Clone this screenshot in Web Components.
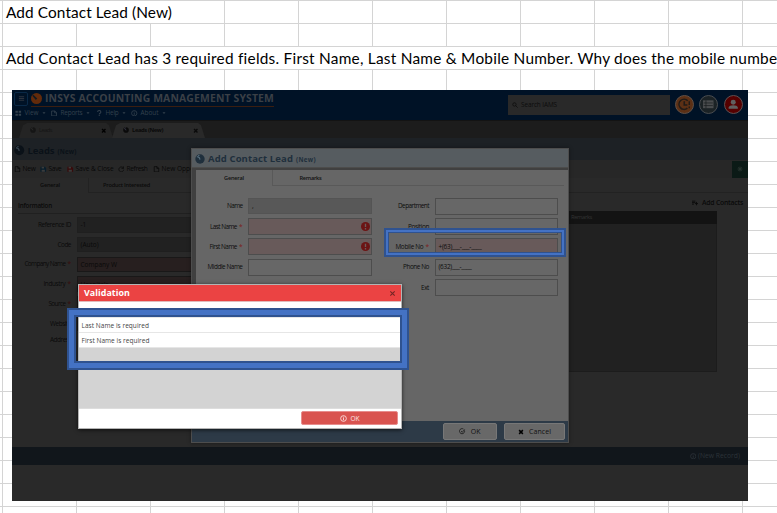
<!DOCTYPE html>
<html lang="en">
<head>
<meta charset="utf-8">
<title>Add Contact Lead (New)</title>
<style>
html,body{margin:0;width:777px;height:513px;overflow:hidden;background:#fff}
body{font-family:"Open Sans","Noto Sans",sans-serif}
</style>
</head>
<body>
<work-sheet>
  <sheet-note slot="row0" style="width:221px"><fit-text w="166" s="15.4">Add Contact Lead (New)</fit-text></sheet-note>
  <sheet-note slot="row2" style="width:774px"><fit-text w="771" s="15.4">Add Contact Lead has 3 required fields. First Name, Last Name &amp; Mobile Number. Why does the mobile numbe</fit-text></sheet-note>
  <lead-app></lead-app>
</work-sheet>
<script>
const def = (name, html, setup) => customElements.define(name, class extends HTMLElement {
  constructor(){ super(); this.attachShadow({mode:'open'}); }
  connectedCallback(){
    if (this.shadowRoot.childNodes.length) return;
    const t = document.createElement('template');
    t.innerHTML = typeof html === 'function' ? html(this) : html;
    this.shadowRoot.append(t.content.cloneNode(true));
    if (setup) setup(this);
  }
});
const a = (el, n, d='') => el.getAttribute(n) ?? d;

def('work-sheet', `<style>
:host{display:flex;flex-direction:column;position:relative;width:777px;height:513px;overflow:hidden;
background-image:linear-gradient(#d4d4d4 1px,transparent 1px),linear-gradient(90deg,transparent 2px,#d4d4d4 2px,#d4d4d4 3px,transparent 3px);
background-size:100% 23px,74px 100%}
.r{height:23px;padding-left:3px;flex:none;box-sizing:border-box}
.stage{margin:-2px 0 0 12px}
</style><div class="r"><slot name="row0"></slot></div><div class="r"></div><div class="r"><slot name="row2"></slot></div><div class="r"></div><div class="stage"><slot></slot></div>`);

def('sheet-note', `<style>:host{display:flex;align-items:center;box-sizing:border-box;height:22px;padding:1px 0 0 3px;background:#fff;color:#000;font-family:Lato,"Open Sans",sans-serif;white-space:nowrap;position:relative;top:1px}</style><slot></slot>`);

const ICONS = {
  globe:'<circle cx="8" cy="8" r="7.5" fill="currentColor"/><path d="M3 4l4 2 1 3M5 3l2-1" fill="none" stroke="var(--cut,#777)" stroke-width="2"/>',
  menu:'<path d="M2 4h12M2 8h12M2 12h12" stroke="currentColor" stroke-width="1.7"/>',
  windows:'<path d="M1 2h6v5H1zM9 2h6v5H9zM1 9h6v5H1zM9 9h6v5H9z" fill="currentColor"/>',
  file:'<path d="M3 1.5h7l4 4v9H3zM9.5 2v4H14" fill="none" stroke="currentColor" stroke-width="1.7"/>',
  report:'<path d="M1.5 2.5h8l4 4v8h-12zM9 2v5h5" fill="none" stroke="currentColor" stroke-width="2"/>',
  save:'<path d="M1 2h11l3 3v9H1z" fill="currentColor"/><path d="M4 2h6v4H4zM4 9h8v5H4z" fill="#3b3b3b"/>',
  refresh:'<path d="M13 5A6 6 0 1 0 14 9M13.500 1v5h-5" fill="none" stroke="currentColor" stroke-width="1.6"/>',
  help:'<path d="M4 5q0-3.500 4-3.500t4 3.500q0 2-2 3t-2 3M8 12.500v3" fill="none" stroke="currentColor" stroke-width="2.500"/>',
  info:'<circle cx="8" cy="8" r="6.5" fill="none" stroke="currentColor" stroke-width="2"/><path d="M8 7v5M8 4v2" stroke="currentColor" stroke-width="2"/>',
  clock:'<path d="M12 13A6.500 6.500 0 1 1 12.500 3.500M8 4v5h4M14.500 4v5M14.500 11v2" fill="none" stroke="currentColor" stroke-width="2"/>',
  list:'<path d="M0 2h16v12H0z" fill="currentColor"/><path d="M1 6h14M1 10h14M4.500 2v12" stroke="#151a1c" stroke-width="1"/>',
  user:'<circle cx="8" cy="5" r="3.800" fill="currentColor"/><path d="M1 15v-2q1-3.500 7-3.500t7 3.500v2z" fill="currentColor"/>',
  search:'<circle cx="6.500" cy="6.500" r="4.500" fill="none" stroke="currentColor" stroke-width="2"/><path d="M10 10l5 5" stroke="currentColor" stroke-width="2"/>',
  x:'<path d="M3 3l10 10M13 3L3 13" stroke="currentColor" stroke-width="var(--sw,4)"/>',
  check:'<path d="M13.500 6A6.300 6.300 0 1 1 11 2.600M5 7.500l3 3 6-7" fill="none" stroke="currentColor" stroke-width="1.8"/>',
  alert:'<circle cx="8" cy="8" r="8" fill="currentColor"/><path d="M8 3v6M8 10.800v2.400" stroke="#6a5a5a" stroke-width="2.400"/>',
  plus:'<path d="M0 3h9M0 7h9M0 11h5M12 5v9M8 9.500h8" stroke="currentColor" stroke-width="2.400"/>',
  caret:'<path d="M2 5h12l-6 7z" fill="currentColor"/>',
  gear:'<circle cx="8" cy="8" r="4" fill="currentColor"/><path d="M8 1v14M1 8h14M3 3l10 10M13 3L3 13" stroke="currentColor" stroke-width="2"/>',
  logo:'<circle cx="8" cy="8" r="8" fill="#632b0b"/><path d="M3 2l6 6-2 2-5-6" fill="#111922"/>'
};
def('ui-icon', el => `<style>:host{display:block;flex:none;width:${a(el,'s',7)}px;height:${a(el,'s',7)}px}svg{display:block;width:100%;height:100%}</style><svg viewBox="0 0 16 16">${ICONS[a(el,'n')]}</svg>`);

def('menu-entry', el => `<style>:host{display:flex;align-items:center;gap:3px;color:#33414d;height:12px;width:${a(el,'box')}px}</style><ui-icon n="${a(el,'icon')}" s="6.500"></ui-icon><slot></slot><ui-icon n="caret" s="4"></ui-icon>`);
def('tool-entry', el => `<style>:host{display:flex;align-items:center;gap:2px;color:#080808;width:${a(el,'box')}px;flex:none;white-space:nowrap}ui-icon{color:${a(el,'c','#080808')}}</style><ui-icon n="${a(el,'icon')}" s="6.500"></ui-icon><slot></slot>`);
def('round-badge', el => `<style>:host{display:flex;align-items:center;justify-content:center;box-sizing:border-box;width:19px;height:19px;border-radius:50%;border:1px solid ${a(el,'edge')};background:${a(el,'bg')};color:${a(el,'fg')}}</style><ui-icon n="${a(el,'icon')}" s="${a(el,'is','10.500')}"></ui-icon>`);

/* One labelled input; the star marks a required field. */
def('form-field', el => `<style>
:host{display:flex;align-items:center;height:${a(el,'h',17)}px;margin-bottom:${a(el,'gap',3.3)}px;color:${a(el,'c','#0d0d0d')};font-size:6.500px}
.l{width:${a(el,'lw')}px;display:flex;justify-content:flex-end;gap:2px;flex:none;white-space:nowrap;margin-right:5.500px}
.star{color:${a(el,'sc','#7c1c1c')};line-height:1.2}
.b{display:flex;align-items:center;justify-content:space-between;flex:1;height:100%;box-sizing:border-box;padding:0 1px 0 3px;border:1px solid ${a(el,'bc','#4d4d4d')};background:${a(el,'bg','#676767')}}
.b ui-icon{color:#6b1414}
</style><div class="l"><fit-text w="${a(el,'w')}" s="6.400">${a(el,'label')}</fit-text>${el.hasAttribute('req')?'<span class="star">*</span>':''}</div>
${el.hasAttribute('nobox')?'':`<div class="b"><span><slot></slot></span>${el.hasAttribute('err')?'<ui-icon n="alert" s="9"></ui-icon>':''}</div>`}`);

def('lead-app', `<style>
:host{display:block;position:relative;width:736px;height:411px;background:#292929;overflow:hidden;color:#0a0a0a}
.top{height:30px;background:#001226;display:flex;justify-content:space-between;box-sizing:border-box}
.brand{display:flex;align-items:center;height:17px;padding-left:2px;color:#3b4046}
.burger{width:12px;height:12px;border:1px solid #0a2947;border-radius:2px;display:flex;align-items:center;justify-content:center;margin-right:3px}
.name{display:flex;align-items:center;gap:3px;height:16px;border-bottom:1.500px solid #3b1e10}
.menu{display:flex;padding:0 0 0 3px;height:12px}
.right{display:flex;gap:5.500px;padding:5px 5.500px 0 0}
.search{width:162px;height:20px;background:#292929;color:#0c0c0c;display:flex;align-items:center;gap:3px;padding-left:4px;box-sizing:border-box;margin-right:-1px}
.tabs{height:18px;background:#1c1c1c;display:flex;align-items:flex-end;padding-left:7px;border-top:1px solid #131313;box-sizing:border-box}
.tab{height:15px;display:flex;align-items:center;justify-content:space-between;padding:0 7px 0 11px;box-sizing:border-box;background:#242424;clip-path:polygon(0 100%,4px 15%,8px 0,calc(100% - 7px) 0,calc(100% - 4px) 15%,100% 100%)}
.tab div,.head{display:flex;align-items:center;gap:3px}
.head{height:22px;background:#1d2125;padding:3px 0 0 2px;color:#0a1118;box-sizing:border-box}
.tools{display:flex;align-items:center;height:18px;background:#272727;padding-left:2px;box-sizing:border-box}
.gear{width:16px;height:17px;background:#0b1a16;color:#27332f;display:flex;align-items:center;justify-content:center;margin-left:auto}
.sub{display:flex;height:15px;box-sizing:border-box}
.sub div{display:flex;align-items:center;justify-content:center;box-sizing:border-box}
.sub .g{width:76px}.sub .p{width:98px;border-left:1px solid #222;border-bottom:1px solid #222;padding-right:22px}.sub .e{flex:1;border-bottom:1px solid #222}
.main{display:flex;justify-content:space-between;height:254px}
.left{width:230px;padding:6px 0 0 6px;box-sizing:border-box}
.info{height:14px;display:flex;align-items:center;border-bottom:1px solid #202020;margin-bottom:3px}
.rc{width:183px;padding-top:3px;margin-right:-1px}
.add{display:flex;align-items:center;justify-content:flex-end;gap:4px;height:14px;padding-right:6px}
.th{height:13px;background:#131313;color:#343434;margin-top:1px;width:151px;display:flex;align-items:center;padding-left:5px;box-sizing:border-box}
.tb{height:147px;width:150px;background:#212121;border:solid #1c1c1c;border-width:0 1px 1px 0}
.foot{height:18px;background:#11161b;color:#2c3339;display:flex;align-items:center;justify-content:flex-end;gap:2px;padding-right:8px}
lead-dialog{position:absolute;left:179px;top:58px}
validation-dialog{position:absolute;left:66px;top:194px}
.mark{position:absolute;box-sizing:border-box}
.m1{left:372px;top:138px;width:182px;height:29px;box-shadow:inset 0 0 0 2px #2f528f,inset 0 0 0 4px #4472c4,inset 0 0 0 5px #2f528f}
.m2{left:55px;top:218px;width:342px;height:62px;box-shadow:inset 0 0 0 2px #2f528f,inset 0 0 0 7px #4472c4,inset 0 0 0 9px #2f528f}
</style>
<div class="top"><div>
 <div class="brand"><div class="burger"><ui-icon n="menu" s="7"></ui-icon></div><div class="name"><ui-icon n="logo" s="11"></ui-icon><fit-text w="229" s="10.400" b="700" style="margin-top:1px">INSYS ACCOUNTING MANAGEMENT SYSTEM</fit-text></div></div>
 <div class="menu"><menu-entry icon="windows" box="36"><fit-text w="14" s="6.400">View</fit-text></menu-entry><menu-entry icon="report" box="45"><fit-text w="22" s="6.400">Reports</fit-text></menu-entry><menu-entry icon="help" box="35"><fit-text w="13" s="6.400">Help</fit-text></menu-entry><menu-entry icon="info" box="40"><fit-text w="18" s="6.400">About</fit-text></menu-entry></div>
</div><div class="right"><div class="search"><ui-icon n="search" s="6"></ui-icon><fit-text w="36" s="6.400">Search IAMS</fit-text></div>
<round-badge icon="clock" is="12.500" bg="#5c3015" fg="#211b17" edge="#605047"></round-badge><round-badge icon="list" bg="#1b2225" fg="#4a4c4e" edge="#4a4d50"></round-badge><round-badge icon="user" bg="#550000" fg="#606060" edge="#605050"></round-badge></div></div>
<div class="tabs"><div class="tab" style="width:94px;color:#151515"><div><ui-icon n="globe" s="6" style="--cut:#333"></ui-icon><fit-text w="13" s="5.800">Leads</fit-text></div><ui-icon n="x" s="5.500" style="color:#000"></ui-icon></div>
<div class="tab" style="width:93px;background:#292929;margin-left:-1px"><div><ui-icon n="globe" s="6" style="--cut:#445"></ui-icon><fit-text w="31" s="5.800" b="700">Leads (New)</fit-text></div><ui-icon n="x" s="5.500"></ui-icon></div></div>
<div class="head"><ui-icon n="globe" s="10.500" style="--cut:#35424d"></ui-icon><fit-text w="27" s="9.500" b="700">Leads</fit-text><fit-text w="19" s="6.200" b="700" style="margin-top:3px">(New)</fit-text></div>
<div class="tools"><tool-entry icon="file" box="26"><fit-text w="13" s="6.600">New</fit-text></tool-entry><tool-entry icon="save" c="#071d2b" box="27"><fit-text w="13" s="6.600">Save</fit-text></tool-entry><tool-entry icon="save" c="#390909" box="51"><fit-text w="38" s="6.600">Save &amp; Close</fit-text></tool-entry><tool-entry icon="refresh" box="35"><fit-text w="21" s="6.600">Refresh</fit-text></tool-entry><tool-entry icon="file" box="70"><fit-text w="53" s="6.600">New Opportunity</fit-text></tool-entry><div class="gear"><ui-icon n="gear" s="6"></ui-icon></div></div>
<div class="sub"><div class="g"><fit-text w="20" s="5.600" b="600">General</fit-text></div><div class="p"><fit-text w="47" s="5.600" b="600">Product Interested</fit-text></div><div class="e"></div></div>
<div class="main"><div class="left"><div class="info"><fit-text w="34" s="6.200" b="600">Information</fit-text></div>
<form-field lw="53" w="33" h="15.500" gap="4.300" label="Reference ID" bg="#212121" bc="#1f1f1f" c="#090909">-1</form-field>
<form-field lw="53" w="13.500" h="15.500" gap="4.300" label="Code" bg="#212121" bc="#1f1f1f" c="#090909">(Auto)</form-field>
<form-field lw="53" w="41" h="15.500" gap="4.300" label="Company Name" req sc="#390b0b" bg="#271f1f" bc="#191818" c="#090909">Company W</form-field>
<form-field lw="53" w="22" h="15.500" gap="4.300" label="Industry" req sc="#390b0b" bg="#271f1f" bc="#191818" c="#090909">Hospitals</form-field>
<form-field lw="53" w="17" h="15.500" gap="4.300" label="Source" req sc="#390b0b" bg="#271f1f" bc="#191818" c="#090909"></form-field>
<form-field lw="53" w="21" h="15.500" gap="1" label="Website" bg="#292929" bc="#191919" c="#090909"></form-field>
<form-field lw="53" w="21" h="15.500" label="Address" nobox c="#090909"></form-field>
</div><div class="rc"><div class="add"><ui-icon n="plus" s="6"></ui-icon><fit-text w="41" s="6.800" b="600">Add Contacts</fit-text></div><div class="th"><fit-text w="21" s="5.800">Remarks</fit-text></div><div class="tb"></div></div></div>
<div class="foot"><ui-icon n="info" s="6.500"></ui-icon><fit-text w="42" s="6.800">(New Record)</fit-text></div>
<lead-dialog></lead-dialog><validation-dialog></validation-dialog><div class="mark m1"></div><div class="mark m2"></div>`);

def('lead-dialog', `<style>
:host{display:flex;flex-direction:column;box-sizing:border-box;width:378px;height:295px;border:1px solid #4d4d4d;background:#404040;box-shadow:0 0 4px #0006;color:#111}
.h{height:19px;box-sizing:border-box;background:#565c60;display:flex;align-items:center;gap:3px;padding:1px 0 0 3px;color:#1f2f3c;border-bottom:1px solid #4c4c4b}
.b{height:251px;background:#666;margin:2px 0 0 4px;display:flex;flex-direction:column}
.t{height:16px;display:flex;flex:none}
.t div{display:flex;align-items:center;justify-content:center;box-sizing:border-box}
.f{display:flex;padding-top:12px}
.f1{width:176px}.f2{width:186px;padding-left:6px;box-sizing:border-box;margin-top:-.5px}
.foot{height:21px;background:#2d3a47;display:flex;align-items:center;justify-content:flex-end;gap:7px;padding-right:3px}
.foot div{height:15px;border:1px solid #777;border-radius:2px;background:#686868;display:flex;align-items:center;justify-content:center;gap:5px}
.foot fit-text{margin-top:1px}
</style><div class="h"><ui-icon n="globe" s="10" style="--cut:#526a79"></ui-icon><fit-text w="85" s="9.500" b="700">Add Contact Lead</fit-text><fit-text w="20" s="6.200" b="700" style="margin-top:3px">(New)</fit-text></div>
<div class="b"><div class="t"><div style="width:76px"><fit-text w="20" s="5.600" b="600">General</fit-text></div><div style="width:76px;border:solid #595959;border-width:0 0 1px 1px;padding-top:1px"><fit-text w="22" s="5.600" b="600">Remarks</fit-text></div><div style="flex:1;border-bottom:1px solid #595959;margin-right:4px"></div></div>
<div class="f"><div class="f1">
<form-field lw="46.500" w="15.500" h="15.500" gap="4.500" label="Name" bg="#585858" bc="#545454">,</form-field>
<form-field lw="46.500" w="27" label="Last Name" req err bg="#685a5a"></form-field>
<form-field lw="46.500" w="27.500" label="First Name" req err bg="#685a5a"></form-field>
<form-field lw="46.500" w="35" label="Middle Name"></form-field>
</div><div class="f2">
<form-field lw="51" w="31" gap="3.500" label="Department"></form-field>
<form-field lw="51" w="21" label="Position"></form-field>
<form-field lw="51" w="28" label="Mobile No" req bg="#685a5a"><fit-text w="43" s="6.400">+(63)___-___-____</fit-text></form-field>
<form-field lw="51" w="26" label="Phone No"><fit-text w="33" s="6.400">(632)___-____</fit-text></form-field>
<form-field lw="51" w="8" label="Ext"></form-field>
</div></div></div>
<div class="foot"><div style="width:52px"><ui-icon n="check" s="6.500"></ui-icon><fit-text w="10" s="7">OK</fit-text></div><div style="width:59px"><ui-icon n="x" s="6" style="color:#000"></ui-icon><fit-text w="22" s="7">Cancel</fit-text></div></div>`);

def('validation-dialog', `<style>
:host{display:flex;flex-direction:column;box-sizing:border-box;width:324px;height:145px;border:1px solid #b4b4b4;background:#fff;box-shadow:0 1px 4px #000a;color:#444}
.h{height:17px;box-sizing:border-box;background:#eb4343;color:#fff;display:flex;align-items:center;justify-content:space-between;padding:0 5px;border-bottom:1px solid #e0bcbc}
.c{height:105.500px;background:#d3d3d3;border-bottom:1px solid #ddd}
.r{height:14px;background:#fff;border-bottom:1px solid #e6e6e6;display:flex;align-items:center;padding:1px 0 0 2.500px;box-sizing:content-box}
.c .r{height:13px}.c .r:first-child{height:14px}
.foot{flex:1;display:flex;align-items:center;justify-content:flex-end;padding-right:3px}
.ok{width:95px;height:12px;border:1px solid #e78d8d;border-radius:2px;background:#d9534f;color:#fbe4e3;display:flex;align-items:center;justify-content:center;gap:4px}
</style><div class="h"><fit-text w="46" s="8.900" b="700">Validation</fit-text><ui-icon n="x" s="7" style="color:#742525;--sw:2.500"></ui-icon></div>
<div class="c"><div class="r" style="align-items:flex-start"><fit-text w="28" s="6.400" style="margin-top:3.500px">Message</fit-text></div><div class="r"><fit-text w="67.500" s="6.500">Last Name is required</fit-text></div><div class="r"><fit-text w="68" s="6.500">First Name is required</fit-text></div></div>
<div class="foot"><div class="ok"><ui-icon n="info" s="7"></ui-icon><fit-text w="9" s="6.600" style="margin-top:1px">OK</fit-text></div></div>`);

/* Text set to an exact advance width by adjusting its tracking. */
def('fit-text', el => `<style>:host{display:block;flex:none;white-space:pre;font-size:${a(el,'s')}px;font-weight:${a(el,'b',400)};width:${a(el,'w')}px;line-height:1.2}span{display:inline-block}</style><span>${el.innerHTML}</span>`,
 el => {
  const s = el.shadowRoot.querySelector('span');
  const n = el.textContent.length;
  s.style.letterSpacing = ((+a(el,'w') - s.getBoundingClientRect().width) / n) + 'px';
 });
</script>
</body>
</html>
